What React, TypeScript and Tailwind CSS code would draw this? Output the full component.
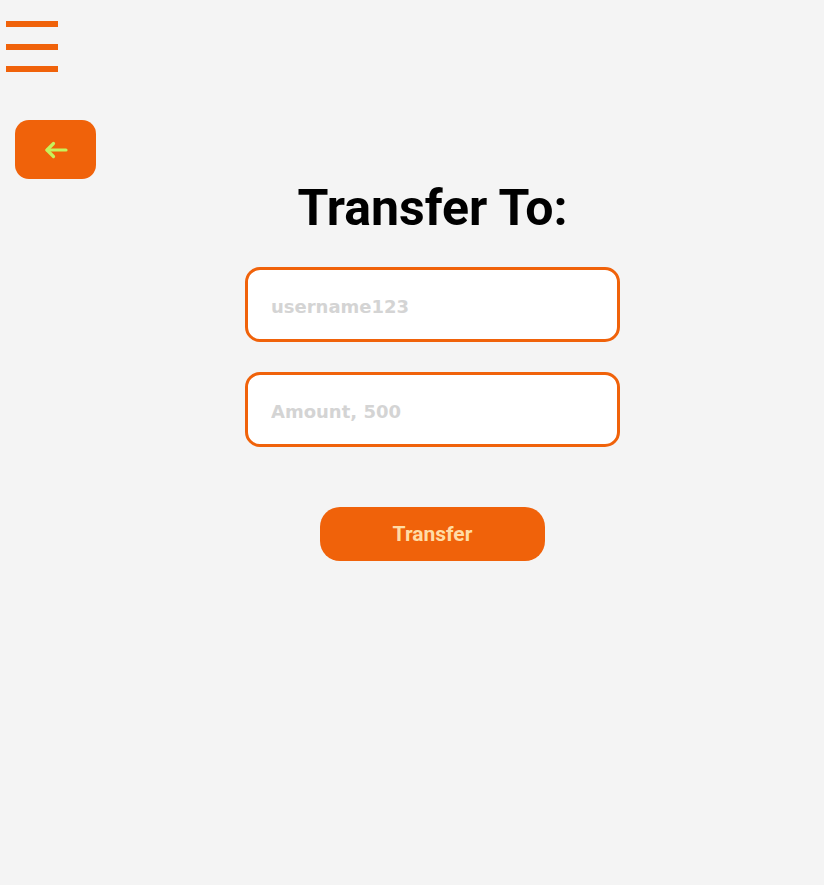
export default function App() {
  return (
    <div className="min-h-screen bg-[#f4f4f4] font-['Roboto',sans-serif]">
      {/* hamburger */}
      <div className="ml-[6px] flex w-[52px] flex-col gap-[16.5px] pt-[21px]">
        <span className="block h-[6px] w-[52px] bg-[#f0620a]" />
        <span className="block h-[6px] w-[52px] bg-[#f0620a]" />
        <span className="block h-[6px] w-[52px] bg-[#f0620a]" />
      </div>

      <button className="ml-[15px] mt-[48px] flex h-[59px] w-[81px] items-center justify-center rounded-[14px] bg-[#f0620a]">
        <svg width="24" height="18" viewBox="0 0 24 18" fill="none" stroke="#c6f25c" strokeWidth="3.2" strokeLinecap="round" strokeLinejoin="round">
          <path d="M22 9H3" />
          <path d="M9.5 2.5L3 9l6.5 6.5" />
        </svg>
      </button>

      <div className="flex flex-col items-center pl-[41px]">
        <h1 className="mt-[1px] text-[50px] leading-[56px] font-bold text-black">Transfer To:</h1>

        <input
          className="mt-[31px] h-[75px] w-[375px] rounded-[15px] border-[3px] border-[#f0620a] bg-white px-[23px] pt-[3px] font-['DejaVu_Sans',sans-serif] text-[18px] font-bold outline-none placeholder:text-[#d4d4d4]"
          placeholder="username123"
        />
        <input
          className="mt-[30px] h-[75px] w-[375px] rounded-[15px] border-[3px] border-[#f0620a] bg-white px-[23px] pt-[3px] font-['DejaVu_Sans',sans-serif] text-[18px] font-bold outline-none placeholder:text-[#d4d4d4]"
          placeholder="Amount, 500"
        />

        <button className="mt-[60px] h-[54px] w-[225px] rounded-[20px] bg-[#f0620a] pt-[2px] text-[21px] font-bold text-[#ffdca6]">
          Transfer
        </button>
      </div>
    </div>
  );
}
